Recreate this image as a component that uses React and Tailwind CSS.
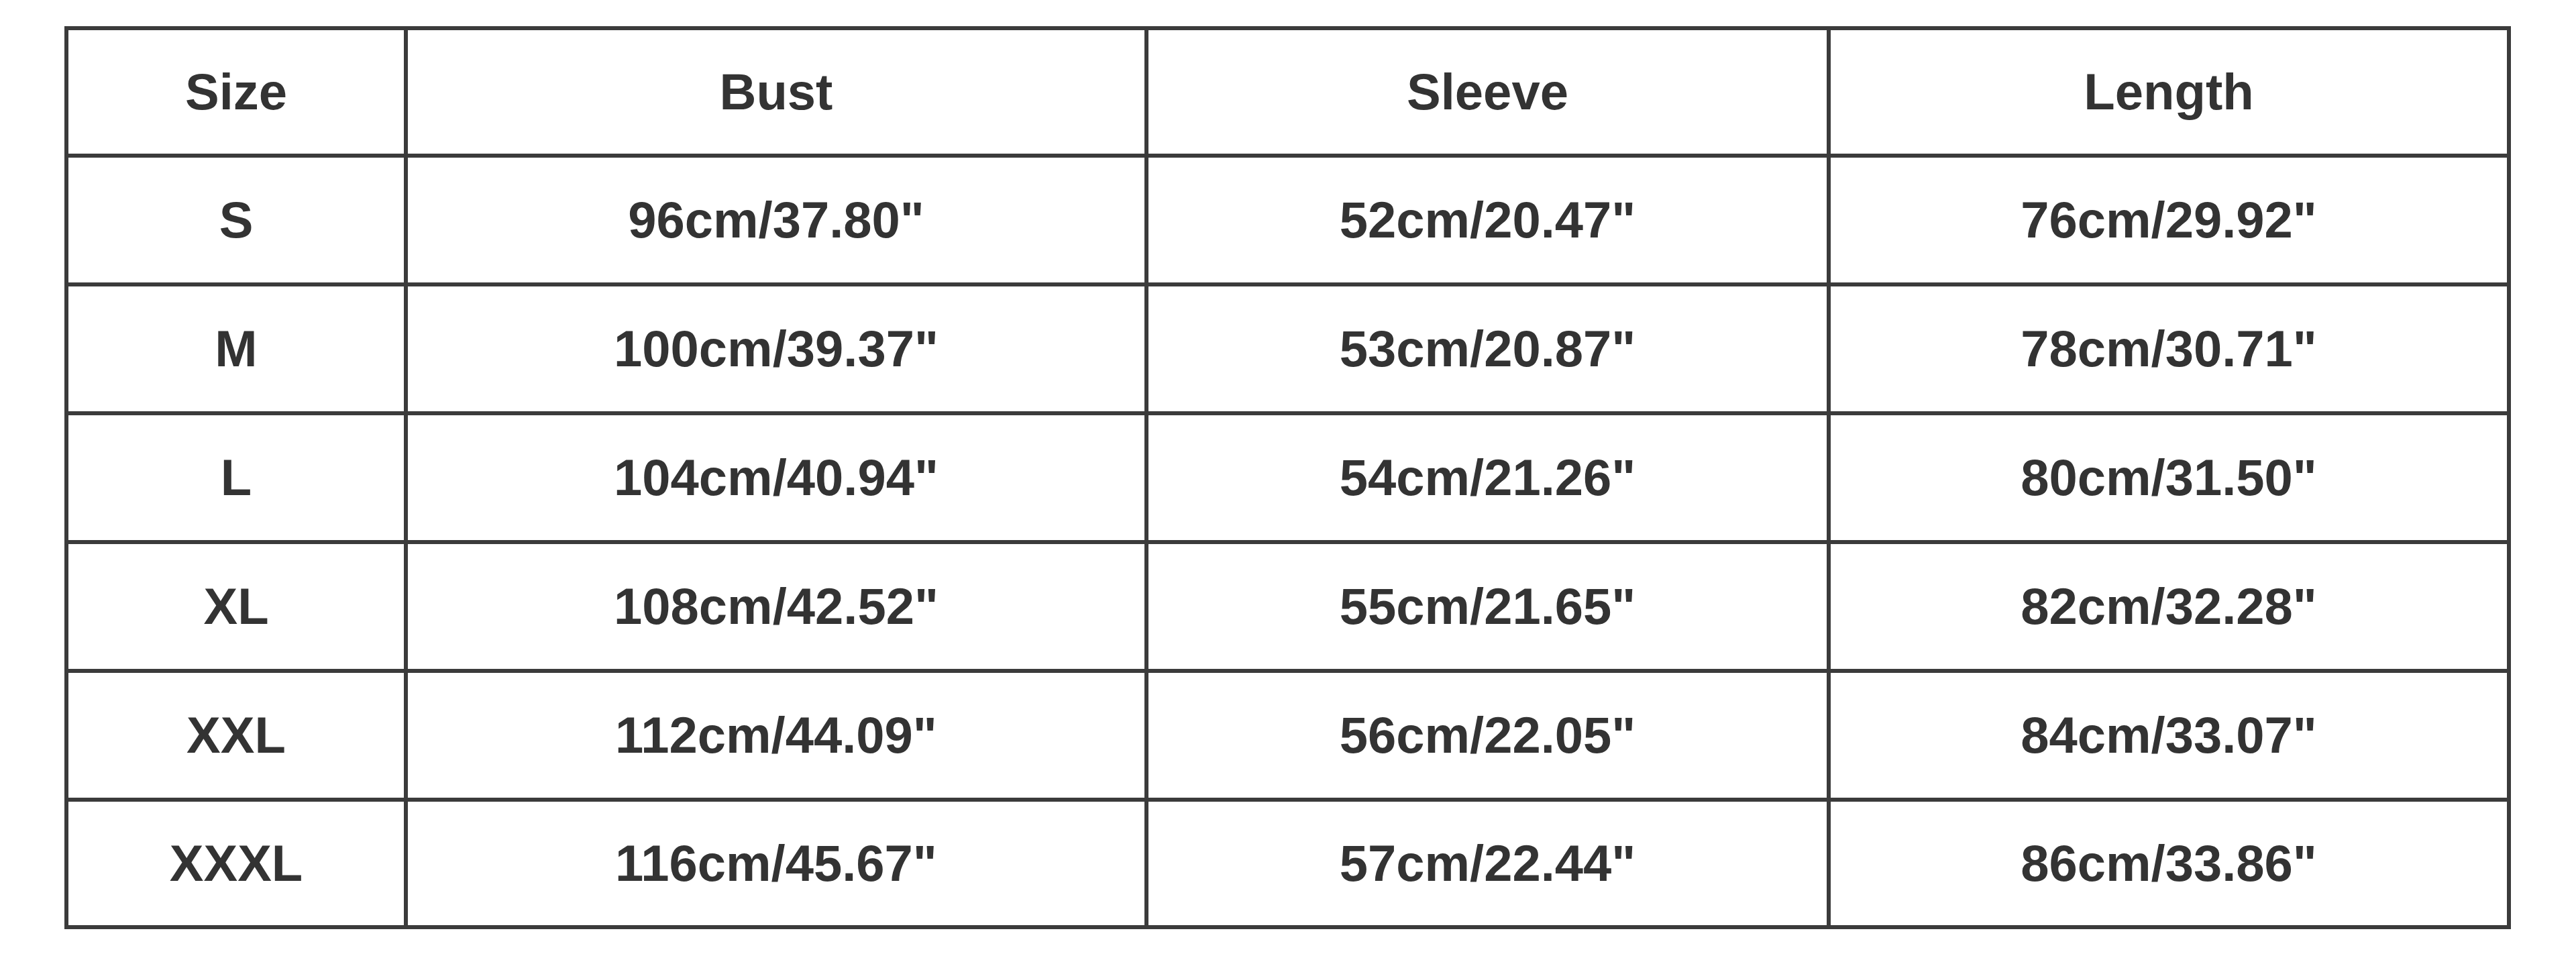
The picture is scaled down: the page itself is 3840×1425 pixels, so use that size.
import React from "react";

const header = ["Size", "Bust", "Sleeve", "Length"];
const rows = [
  ["S", "96cm/37.80\"", "52cm/20.47\"", "76cm/29.92\""],
  ["M", "100cm/39.37\"", "53cm/20.87\"", "78cm/30.71\""],
  ["L", "104cm/40.94\"", "54cm/21.26\"", "80cm/31.50\""],
  ["XL", "108cm/42.52\"", "55cm/21.65\"", "82cm/32.28\""],
  ["XXL", "112cm/44.09\"", "56cm/22.05\"", "84cm/33.07\""],
  ["XXXL", "116cm/45.67\"", "57cm/22.44\"", "86cm/33.86\""],
];

export default function App() {
  const all = [header, ...rows];
  return (
    <div className="w-[3840px] h-[1425px] bg-white pt-[39px] pl-[96px] font-['Liberation_Sans',Arial,sans-serif]">
      <div className="grid w-[3641px] grid-cols-[506px_1104px_1017px_1014px] grid-rows-[190px_192px_192px_192px_192px_192px_190px] border-l-[6px] border-t-[6px] border-[#3b3b3b] box-content">
        {all.map((r, i) =>
          r.map((c, j) => (
            <div
              key={i + "-" + j}
              className="flex items-center justify-center border-r-[6px] border-b-[6px] border-[#3b3b3b] text-[76px] font-bold text-[#333333] leading-none"
            >
              {c}
            </div>
          ))
        )}
      </div>
    </div>
  );
}
